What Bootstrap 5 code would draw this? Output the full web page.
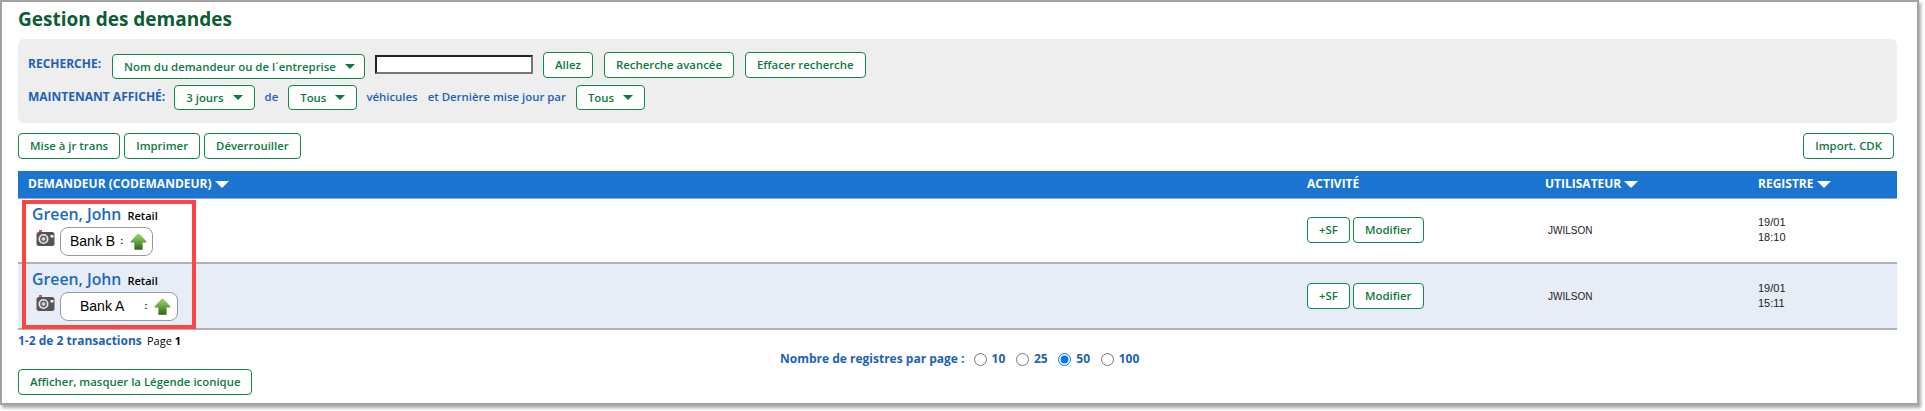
<!DOCTYPE html>
<html lang="fr">
<head>
<meta charset="utf-8">
<title>Gestion des demandes</title>
<link href="https://cdn.jsdelivr.net/npm/bootstrap@5.3.0/dist/css/bootstrap.min.css" rel="stylesheet">
<style>
html,body{background:#fff;overflow:hidden}
body{font-family:"Open Sans",sans-serif;font-size:11px;color:#000;height:411px}
.sheet{position:relative;width:1919px;height:405px;border:2px solid #a3a3a3;box-shadow:2px 3px 3px #aaa;padding:0 20px 0 16px}
.page-title{font-size:19px;font-weight:700;color:#0b5d33;margin:4px 0 0;line-height:26px;height:33px}
.search-box{background:#eee;border-radius:6px;height:84px;padding:13px 0 0 10px}
.lbl{color:#1d62b5;font-weight:600;font-size:11.4px;line-height:24px;white-space:nowrap}
.lbl-strong{font-weight:700;font-size:12px}
.gbtn{--bs-btn-font-size:11.4px;--bs-btn-font-weight:600;--bs-btn-color:#0c7a3e;--bs-btn-bg:#fff;--bs-btn-border-color:#0f8a45;--bs-btn-hover-color:#0c7a3e;--bs-btn-hover-bg:#f2f8f4;--bs-btn-hover-border-color:#0f8a45;--bs-btn-padding-y:0;--bs-btn-padding-x:11px;--bs-btn-border-radius:4px;--bs-btn-line-height:24px;height:26px;white-space:nowrap}
.gbtn.dropdown-toggle{height:25px;padding-top:1px;line-height:22px}
.gbtn.dropdown-toggle::after{margin-left:9px;vertical-align:2px;border-top-width:5px;border-left-width:5px;border-right-width:5px}
.wide-select{width:253px}
.row-one{height:33px}
.row-one .dropdown-toggle{margin-top:2px}
.txt-input{width:158px;height:19px;margin:3px 10px 0 2px;border:2px solid;border-color:#222 #777 #777 #222;background:#fff;padding:0}
.tools{margin-top:10px;height:38px}
.req-table{margin:0;table-layout:fixed;width:1879px;--bs-table-bg:transparent;font-size:10px}
.req-table th{background:#1b74cf;color:#fff;font-size:12px;font-weight:700;padding:0 10px;height:27px;line-height:26px;border-bottom:1px solid #9aa7b5;vertical-align:middle;white-space:nowrap}
.req-table td{padding:0 10px;vertical-align:middle;border-bottom:2px solid #b0b0b0}
.req-table tbody tr{height:66px}
.req-table tbody tr:first-child{height:65px}
.req-table tr.alt td{background:#e6edf6}
.req-table tr.alt td:first-child{padding-bottom:1px}
.col-a{width:1279px}.col-b{width:238px}.col-c{width:213px}.col-d{width:149px}
.sort-tri{display:inline-block;border:solid transparent;border-width:7px 7px 0;border-top-color:#fff;margin-left:3px;vertical-align:0}
.who{color:#1d68bf;font-size:15.8px;font-weight:600;line-height:18px;margin-left:4px;white-space:nowrap}
.who span{color:#000;font-size:11px;margin-left:2px}
.bank-line{margin-left:8px;margin-top:2px}
.cam{margin:3px 4px 0 0}
.bank-pill{display:flex;align-items:center;background:#fff;border:1px solid #999;border-radius:8px;height:29px;font-family:"Liberation Sans",sans-serif;font-size:14px;color:#000;padding-left:9px}
.pill-b{width:93px}
.pill-a{width:118px;padding-left:19px}
.pill-b .colon{margin-left:5px}
.pill-a .colon{margin-left:20px}
.colon{font-size:9px;margin-right:7px;font-weight:700}
.sf-btn{width:43px;--bs-btn-padding-x:0}
.act-gap{gap:3px}
.user-cell,.date-cell{font-family:"Liberation Sans",sans-serif;color:#222}
.user-cell{font-size:10px;padding-left:13px!important}
.date-cell{font-size:11px;line-height:15px}
.red-mark{position:absolute;left:20px;top:198px;width:174px;height:129px;border:4px solid #ff4444;pointer-events:none}
.pager-info{color:#1d62b5;font-weight:700;font-size:12px;margin-top:3px;line-height:15px;white-space:nowrap}
.pager-info span{color:#000;font-weight:400;margin-left:2px;font-size:11px}
.pager-info b{color:#000}
.per-page{color:#1d62b5;font-weight:700;font-size:12px;margin:3px 0 0 762px;height:16px;line-height:16px;white-space:nowrap}
.per-title{margin-right:6px}
.per-page input{margin:0;width:13px;height:13px;vertical-align:-3px}
.per-page label{margin-right:7.5px;margin-left:5px}
.legend-row{margin-top:2px}
</style>
</head>
<body>
<div class="sheet">
  <h1 class="page-title">Gestion des demandes</h1>
  <div class="search-box">
    <div class="d-flex align-items-start row-one">
      <span class="lbl lbl-strong" style="margin-right:11px">RECHERCHE:</span>
      <button type="button" class="btn gbtn dropdown-toggle wide-select me-2">Nom du demandeur ou de l´entreprise</button>
      <input type="text" class="txt-input" aria-label="Recherche">
      <button type="button" class="btn gbtn" style="margin-right:11px">Allez</button>
      <button type="button" class="btn gbtn" style="margin-right:11px">Recherche avancée</button>
      <button type="button" class="btn gbtn">Effacer recherche</button>
    </div>
    <div class="d-flex align-items-start row-two">
      <span class="lbl lbl-strong" style="margin-right:9px">MAINTENANT AFFICHÉ:</span>
      <button type="button" class="btn gbtn dropdown-toggle" style="margin-right:10px">3 jours</button>
      <span class="lbl" style="margin-right:10px">de</span>
      <button type="button" class="btn gbtn dropdown-toggle" style="margin-right:9px">Tous</button>
      <span class="lbl" style="margin-right:10px">véhicules</span>
      <span class="lbl" style="margin-right:10px">et Dernière mise jour par</span>
      <button type="button" class="btn gbtn dropdown-toggle">Tous</button>
    </div>
  </div>
  <div class="d-flex justify-content-between tools">
    <div class="d-flex gap-1">
      <button type="button" class="btn gbtn">Mise à jr trans</button>
      <button type="button" class="btn gbtn">Imprimer</button>
      <button type="button" class="btn gbtn">Déverrouiller</button>
    </div>
    <button type="button" class="btn gbtn" style="margin-right:3px">Import. CDK</button>
  </div>
  <table class="table req-table">
    <colgroup><col class="col-a"><col class="col-b"><col class="col-c"><col class="col-d"></colgroup>
    <thead>
      <tr>
        <th>DEMANDEUR (CODEMANDEUR)<i class="sort-tri"></i></th>
        <th>ACTIVITÉ</th>
        <th>UTILISATEUR<i class="sort-tri"></i></th>
        <th>REGISTRE<i class="sort-tri"></i></th>
      </tr>
    </thead>
    <tbody>
      <tr>
        <td>
          <div class="who">Green, John <span>Retail</span></div>
          <div class="d-flex align-items-start bank-line">
            <svg class="cam" width="20" height="17" viewBox="0 0 20 17" aria-hidden="true"><rect x="3" y="0" width="3" height="2.5" fill="#c9565f"/><rect x="0.5" y="2" width="18" height="14" rx="2.5" fill="#555"/><circle cx="7.5" cy="9" r="5" fill="#e8e8e8"/><circle cx="7.5" cy="9" r="3.4" fill="#666"/><circle cx="7.5" cy="9" r="1.8" fill="#d8d8d8"/><rect x="14.5" y="5" width="3" height="2.5" fill="#f2f2f2"/></svg>
            <div class="bank-pill pill-b">Bank B<span class="colon">:</span><svg width="17" height="17" viewBox="0 0 17 17" aria-hidden="true"><defs><linearGradient id="ga" x1="0" y1="0" x2="0" y2="1"><stop offset="0" stop-color="#a9d777"/><stop offset=".55" stop-color="#5f9e38"/><stop offset="1" stop-color="#2c5f1a"/></linearGradient></defs><path d="M8.5 .4Q9 .4 9.6 1L16.4 8.6Q16.9 9.4 16 9.4H12.6V16.2Q12.6 16.8 12 16.8H5Q4.4 16.8 4.4 16.2V9.4H1Q.1 9.4 .6 8.6L7.4 1Q8 .4 8.5 .4Z" fill="url(#ga)"/></svg></div>
          </div>
        </td>
        <td><div class="d-flex act-gap"><button type="button" class="btn gbtn sf-btn">+SF</button><button type="button" class="btn gbtn">Modifier</button></div></td>
        <td class="user-cell">JWILSON</td>
        <td class="date-cell">19/01<br>18:10</td>
      </tr>
      <tr class="alt">
        <td>
          <div class="who">Green, John <span>Retail</span></div>
          <div class="d-flex align-items-start bank-line">
            <svg class="cam" width="20" height="17" viewBox="0 0 20 17" aria-hidden="true"><rect x="3" y="0" width="3" height="2.5" fill="#c9565f"/><rect x="0.5" y="2" width="18" height="14" rx="2.5" fill="#555"/><circle cx="7.5" cy="9" r="5" fill="#e8e8e8"/><circle cx="7.5" cy="9" r="3.4" fill="#666"/><circle cx="7.5" cy="9" r="1.8" fill="#d8d8d8"/><rect x="14.5" y="5" width="3" height="2.5" fill="#f2f2f2"/></svg>
            <div class="bank-pill pill-a">Bank A<span class="colon">:</span><svg width="17" height="17" viewBox="0 0 17 17" aria-hidden="true"><path d="M8.5 .4Q9 .4 9.6 1L16.4 8.6Q16.9 9.4 16 9.4H12.6V16.2Q12.6 16.8 12 16.8H5Q4.4 16.8 4.4 16.2V9.4H1Q.1 9.4 .6 8.6L7.4 1Q8 .4 8.5 .4Z" fill="url(#ga)"/></svg></div>
          </div>
        </td>
        <td><div class="d-flex act-gap"><button type="button" class="btn gbtn sf-btn">+SF</button><button type="button" class="btn gbtn">Modifier</button></div></td>
        <td class="user-cell">JWILSON</td>
        <td class="date-cell">19/01<br>15:11</td>
      </tr>
    </tbody>
  </table>
  <div class="red-mark"></div>
  <div class="pager-info">1-2 de 2 transactions <span>Page <b>1</b></span></div>
  <div class="per-page">
    <span class="per-title">Nombre de registres par page :</span>
    <input type="radio" name="pp" id="p10"><label for="p10">10</label>
    <input type="radio" name="pp" id="p25"><label for="p25">25</label>
    <input type="radio" name="pp" id="p50" checked><label for="p50">50</label>
    <input type="radio" name="pp" id="p100"><label for="p100">100</label>
  </div>
  <div class="legend-row"><button type="button" class="btn gbtn">Afficher, masquer la Légende iconique</button></div>
</div>
<script src="https://cdn.jsdelivr.net/npm/bootstrap@5.3.0/dist/js/bootstrap.bundle.min.js"></script>
</body>
</html>
